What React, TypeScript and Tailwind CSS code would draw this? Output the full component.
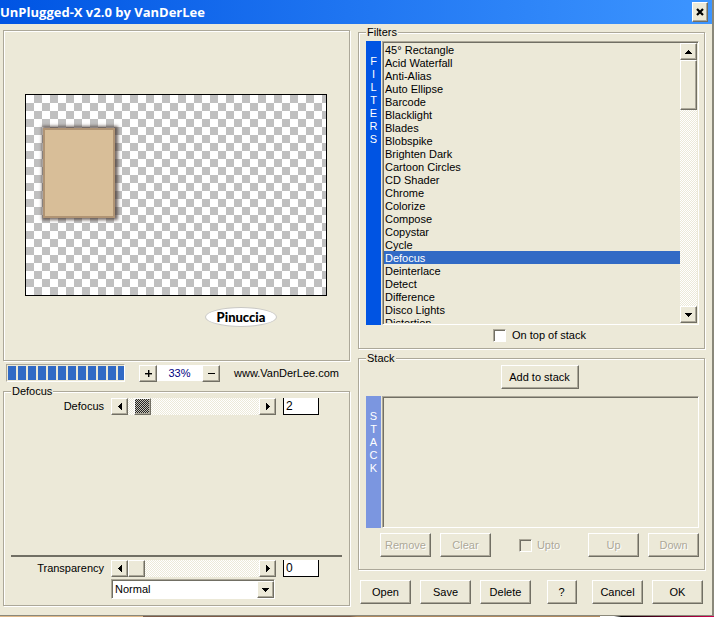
import { useState } from 'react'
import type { ReactNode } from 'react'
import clsx from 'clsx'

const filters = [
  '45° Rectangle', 'Acid Waterfall', 'Anti-Alias', 'Auto Ellipse', 'Barcode', 'Blacklight', 'Blades', 'Blobspike',
  'Brighten Dark', 'Cartoon Circles', 'CD Shader', 'Chrome', 'Colorize', 'Compose', 'Copystar', 'Cycle', 'Defocus',
  'Deinterlace', 'Detect', 'Difference', 'Disco Lights', 'Distortion',
]

const raised = 'bg-[#ece9d8] border border-white border-r-[#716f64] border-b-[#716f64] shadow-[inset_-1px_-1px_0_#aca899]'
const sunken = 'border border-[#aca899] border-r-white border-b-white p-px shadow-[inset_1px_1px_0_#716f64]'
const etched = 'border border-[#aca899] shadow-[inset_1px_1px_0_#fff,1px_1px_0_#fff]'
const dither = 'bg-[conic-gradient(#fff_25%,#ece9d8_0_50%,#fff_0_75%,#ece9d8_0)] bg-[length:2px_2px]'

const arrows = {
  up: 'M0 4h7L3.5 0z',
  down: 'M0 0h7L3.5 4z',
  left: 'M4 0v7L0 3.5z',
  right: 'M0 0v7l4-3.5z',
}

function Arrow({ dir }: { dir: keyof typeof arrows }) {
  const flat = dir === 'up' || dir === 'down'
  return (
    <svg width={flat ? 7 : 4} height={flat ? 4 : 7} shapeRendering="crispEdges" aria-hidden="true">
      <path d={arrows[dir]} />
    </svg>
  )
}

function ArrowButton({ dir, label }: { dir: keyof typeof arrows; label: string }) {
  return (
    <button aria-label={label} className={clsx(raised, 'flex h-[17px] w-[17px] shrink-0 items-center justify-center')}>
      <Arrow dir={dir} />
    </button>
  )
}

function PushButton({ children, disabled, className = 'w-[51px]' }: { children: ReactNode; disabled?: boolean; className?: string }) {
  return (
    <button
      disabled={disabled}
      className={clsx(raised, 'h-6 text-center disabled:text-[#aca899] disabled:[text-shadow:1px_1px_0_#fff]', className)}
    >
      {children}
    </button>
  )
}

function Group({ title, children, className }: { title: string; children: ReactNode; className?: string }) {
  return (
    <fieldset className={clsx(etched, 'min-w-0', className)}>
      <legend className="bg-[#ece9d8] px-px">{title}</legend>
      {children}
    </fieldset>
  )
}

function SideLabel({ text, className }: { text: string; className: string }) {
  return (
    <div className={clsx('flex w-[15px] shrink-0 flex-col items-center pt-3.5 text-white', className)}>
      {text.split('').map((letter, i) => (
        <span key={i}>{letter}</span>
      ))}
    </div>
  )
}

interface SliderRowProps {
  id: string
  label: string
  value: number
  max: number
  active?: boolean
  onChange: (value: number) => void
}

function SliderRow({ id, label, value, max, active, onChange }: SliderRowProps) {
  return (
    <div className="flex items-center">
      <label htmlFor={id} className="w-[100px] shrink-0 pr-[7px] text-right">{label}</label>
      <div className="flex min-w-0 flex-1">
        <ArrowButton dir="left" label={`${label} down`} />
        <input
          id={id}
          type="range"
          min={0}
          max={max}
          value={value}
          onChange={(e) => onChange(Number(e.target.value))}
          className={clsx(
            dither,
            'h-[17px] min-w-0 flex-1 appearance-none [&::-webkit-slider-thumb]:h-[17px] [&::-webkit-slider-thumb]:w-[17px] [&::-webkit-slider-thumb]:appearance-none [&::-webkit-slider-thumb]:border [&::-webkit-slider-thumb]:border-white [&::-webkit-slider-thumb]:border-r-[#716f64] [&::-webkit-slider-thumb]:border-b-[#716f64] [&::-webkit-slider-thumb]:bg-[#ece9d8] [&::-webkit-slider-thumb]:shadow-[inset_-1px_-1px_0_#aca899]',
            active &&
              '[&::-webkit-slider-thumb]:bg-[conic-gradient(#222_25%,#c8c5b8_0_50%,#222_0_75%,#c8c5b8_0)] [&::-webkit-slider-thumb]:bg-[length:2px_2px]'
          )}
        />
        <ArrowButton dir="right" label={`${label} up`} />
      </div>
      <input
        aria-label={`${label} value`}
        value={value}
        onChange={(e) => onChange(Number(e.target.value) || 0)}
        className="mr-[23px] ml-[7px] h-[17px] w-9 border border-t-0 border-black bg-white px-0.5 text-[12px]"
      />
    </div>
  )
}

function Preview() {
  return (
    <section aria-label="Preview" className={clsx(etched, 'relative flex h-[331px] items-center justify-center pr-[22px] pb-0.5 pl-[21px]')}>
      <div className="relative h-[202px] w-full border border-black bg-[conic-gradient(#c0c0c0_25%,#fff_0_50%,#c0c0c0_0_75%,#fff_0)] bg-[length:16px_16px]">
        <div className="absolute top-[33px] left-[17px] h-[90px] w-[72px] border-2 border-[#b09474] bg-[#d8be98] shadow-[1px_0_3px_2px_rgba(60,45,40,0.7)]" />
      </div>
      <div className="absolute right-[72px] bottom-[33px] flex h-5 w-[72px] items-center justify-center rounded-[50%] border border-[#c9c8c4] bg-white font-['Lato',sans-serif] text-[13px] font-black text-black">
        Pinuccia
      </div>
    </section>
  )
}

export default function App() {
  const [selected, setSelected] = useState('Defocus')
  const [defocus, setDefocus] = useState(2)
  const [transparency, setTransparency] = useState(0)

  return (
    <div className="flex min-h-screen flex-col bg-[#ece9d8] font-['Liberation_Sans',Arial,sans-serif] text-[11px] leading-[13px] text-black">
      <div className="flex flex-1 flex-col border-r-2 border-b border-[#8a887a]">
        <header className="flex h-6 items-center justify-between bg-linear-to-r from-[#0054e3] to-[#3d95ff] pr-1">
          <h1 className="font-['Open_Sans',sans-serif] text-[13px] font-bold text-white">UnPlugged-X v2.0 by VanDerLee</h1>
          <button aria-label="Close" className={clsx(raised, 'flex h-5 w-4 items-center justify-center')}>
            <svg width="8" height="8" viewBox="0 0 8 8" aria-hidden="true">
              <path d="M1 1l6 6M7 1L1 7" stroke="#000" strokeWidth="2.2" />
            </svg>
          </button>
        </header>

        <main className="grid flex-1 grid-cols-2 gap-2 pr-[7px] pb-[9px] pl-[3px]">
          <div className="flex min-w-0 flex-col pt-1.5">
            <Preview />
            <div className="flex h-6 items-center pl-[3px]">
              <div
                role="progressbar"
                aria-label="Rendering"
                aria-valuenow={100}
                className="flex h-[18px] w-[119px] gap-0.5 overflow-hidden border border-[#aca899] border-r-white border-b-white p-px"
              >
                {Array.from({ length: 12 }, (_, i) => (
                  <span key={i} className="w-2 shrink-0 bg-[#316ac5]" />
                ))}
              </div>
              <button aria-label="Zoom in" className={clsx(raised, 'ml-3.5 flex h-[17px] w-[18px] items-center justify-center')}>
                <svg width="7" height="7" shapeRendering="crispEdges" aria-hidden="true"><path d="M0 3h3V0h1v3h3v1H4v3H3V4H0z" stroke="#000" strokeWidth=".4" /></svg>
              </button>
              <output className="h-4 w-[45px] bg-white text-center leading-4 text-[#000080]">33%</output>
              <button aria-label="Zoom out" className={clsx(raised, 'flex h-[17px] w-[18px] items-center justify-center')}>
                <svg width="7" height="1" aria-hidden="true"><path d="M0 0h7v1H0z" /></svg>
              </button>
              <a href="#" className="ml-3.5">www.VanDerLee.com</a>
            </div>

            <Group title={selected} className="flex flex-1 flex-col px-[7px] pb-1.5">
              <SliderRow id="defocus" label="Defocus" value={defocus} max={38} active onChange={setDefocus} />
              <div className="mt-auto mb-[3px] h-0.5 bg-[#716f64]" />
              <SliderRow id="transparency" label="Transparency" value={transparency} max={255} onChange={setTransparency} />
              <div className="relative mt-0.5 mr-[67px] ml-[100px]">
                <select aria-label="Blend mode" className={clsx(sunken, 'block h-5 w-full appearance-none bg-white pl-[3px]')}>
                  <option>Normal</option>
                  <option>Multiply</option>
                  <option>Screen</option>
                </select>
                <span className={clsx(raised, 'pointer-events-none absolute top-0.5 right-px flex h-[17px] w-[17px] items-center justify-center')}>
                  <Arrow dir="down" />
                </span>
              </div>
            </Group>
          </div>

          <div className="flex min-w-0 flex-col pt-0.5">
            <Group title="Filters" className="pt-0.5 pr-[5px] pb-1.5 pl-[7px]">
              <div className="flex h-[284px]">
                <SideLabel text="FILTERS" className="bg-[#0054e3]" />
                <div className={clsx(sunken, 'ml-px flex min-w-0 flex-1')}>
                  <ul className="min-w-0 flex-1 overflow-hidden">
                    {filters.map((name) => (
                      <li key={name}>
                        <button
                          onClick={() => setSelected(name)}
                          className={clsx('block h-[13px] w-full pl-px text-left leading-[15px]', name === selected && 'bg-[#316ac5] text-white')}
                        >
                          {name}
                        </button>
                      </li>
                    ))}
                  </ul>
                  <div className={clsx(dither, 'flex w-[17px] flex-col')}>
                    <ArrowButton dir="up" label="Scroll up" />
                    <div className={clsx(raised, 'h-[50px]')} />
                    <div className="mt-auto">
                      <ArrowButton dir="down" label="Scroll down" />
                    </div>
                  </div>
                </div>
              </div>
              <label className="mt-1 flex items-center justify-center gap-1.5 pl-3.5">
                <input type="checkbox" className={clsx(sunken, 'h-[13px] w-[13px] appearance-none bg-white')} />
                On top of stack
              </label>
            </Group>

            <Group title="Stack" className="mt-[3px] pr-[5px] pb-3 pl-[7px]">
              <div className="flex justify-center pl-3.5">
                <PushButton className="w-[78px]">Add to stack</PushButton>
              </div>
              <div className="mt-[7px] flex h-[132px]">
                <SideLabel text="STACK" className="bg-[#7b96e0]" />
                <div className={clsx(sunken, 'ml-px flex-1')} />
              </div>
              <div className="mt-[5px] flex items-center justify-between pl-3.5">
                <div className="flex gap-[9px]">
                  <PushButton disabled>Remove</PushButton>
                  <PushButton disabled>Clear</PushButton>
                </div>
                <label className="flex items-center gap-[5px] text-[#aca899] [text-shadow:1px_1px_0_#fff]">
                  <input type="checkbox" disabled className={clsx(sunken, 'h-[13px] w-[13px] appearance-none')} />
                  Upto
                </label>
                <div className="flex gap-[9px]">
                  <PushButton disabled>Up</PushButton>
                  <PushButton disabled>Down</PushButton>
                </div>
              </div>
            </Group>

            <div className="mt-2.5 flex items-center justify-between px-0.5">
              <div className="flex gap-[9px]">
                <PushButton>Open</PushButton>
                <PushButton>Save</PushButton>
                <PushButton>Delete</PushButton>
              </div>
              <PushButton className="w-[30px]">?</PushButton>
              <div className="flex gap-[9px]">
                <PushButton>Cancel</PushButton>
                <PushButton>OK</PushButton>
              </div>
            </div>
          </div>
        </main>
      </div>
      <div className="h-px bg-[linear-gradient(to_right,#e0b98a_20%,#7d5c48_20%_49%,#b08a60_50%_84%,#fff_84%_86%,#000_87%,#d0004c)]" />
    </div>
  )
}
